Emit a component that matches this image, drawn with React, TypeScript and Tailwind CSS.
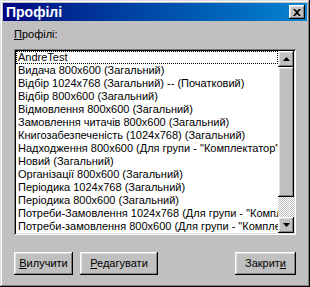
import React from 'react';

const items = [
  'AndreTest',
  'Видача 800x600 (Загальний)',
  'Відбір 1024x768 (Загальний) -- (Початковий)',
  'Відбір 800x600 (Загальний)',
  'Відмовлення 800x600 (Загальний)',
  'Замовлення читачів 800x600 (Загальний)',
  'Книгозабезпеченість (1024x768) (Загальний)',
  'Надходження 800x600 (Для групи - "Комплектатор")',
  'Новий (Загальний)',
  'Організації 800x600 (Загальний)',
  'Періодика 1024x768 (Загальний)',
  'Періодика 800x600 (Загальний)',
  'Потреби-Замовлення 1024x768 (Для групи - "Комплектатор")',
  'Потреби-замовлення 800x600 (Для групи - "Комплектатор")',
];

const raised =
  'shadow-[inset_-1px_-1px_#000,inset_1px_1px_#fff,inset_-2px_-2px_#808080,inset_2px_2px_#dfdfdf]';

const Btn = ({ children, w }: { children: React.ReactNode; w: string }) => (
  <button className={`${w} h-[23px] bg-[#c0c0c0] ${raised} text-[11px] text-black flex items-center justify-center`}>
    {children}
  </button>
);

const Arrow = ({ up }: { up?: boolean }) => (
  <div className={`w-[16px] h-[16px] bg-[#c0c0c0] ${raised} flex items-center justify-center`}>
    <svg width="7" height="4" viewBox="0 0 7 4">
      {up ? <polygon points="3.5,0 7,4 0,4" fill="#000" /> : <polygon points="0,0 7,0 3.5,4" fill="#000" />}
    </svg>
  </div>
);

export default function App() {
  return (
    <div
      className="w-[310px] h-[287px] bg-[#c0c0c0] p-[3px] flex flex-col shadow-[inset_-1px_-1px_#000,inset_1px_1px_#dfdfdf,inset_-2px_-2px_#808080,inset_2px_2px_#fff]"
      style={{ fontFamily: '"Liberation Sans", Arial, sans-serif' }}
    >
      {/* Title bar */}
      <div className="h-[18px] bg-gradient-to-r from-[#000080] to-[#1084d0] flex items-center justify-between pl-[3px] pr-[2px]">
        <span className="text-white font-bold text-[14px] leading-none">Профілі</span>
        <div className={`w-[16px] h-[14px] bg-[#c0c0c0] ${raised} flex items-center justify-center`}>
          <svg width="8" height="7" viewBox="0 0 8 7">
            <path d="M0 0h2l2 2 2-2h2L5 3.5 8 7H6L4 5 2 7H0l3-3.5z" fill="#000" />
          </svg>
        </div>
      </div>

      {/* Body */}
      <div className="flex-1 flex flex-col px-[11px] pt-[7px]">
        <div className="text-[11px] leading-[13px] text-black h-[13px]">
          <span className="underline">П</span>рофілі:
        </div>

        <div className="mt-[8px] h-[186px] flex p-[2px] bg-white shadow-[inset_1px_1px_#808080,inset_-1px_-1px_#fff,inset_2px_2px_#000,inset_-2px_-2px_#dfdfdf]">
          <div className="flex-1 overflow-hidden">
            {items.map((it, i) => (
              <div
                key={i}
                className={`h-[13px] text-[11px] leading-[13px] whitespace-nowrap text-black pl-[2px] ${
                  i === 0 ? 'outline-1 outline-dotted outline-black -outline-offset-1' : ''
                }`}
              >
                {it}
              </div>
            ))}
          </div>
          <div className="w-[16px] flex flex-col">
            <Arrow up />
            <div className={`h-[130px] bg-[#c0c0c0] ${raised}`} />
            <div className="flex-1 bg-[repeating-conic-gradient(#c0c0c0_0_25%,#fff_0_50%)] bg-[length:2px_2px]" />
            <Arrow />
          </div>
        </div>

        <div className="mt-[17px] flex">
          <Btn w="w-[59px]">
            <span>
              <span className="underline">В</span>илучити
            </span>
          </Btn>
          <div className="w-[7px]" />
          <Btn w="w-[78px]">
            <span>
              <span className="underline">Р</span>едагувати
            </span>
          </Btn>
          <div className="flex-1" />
          <Btn w="w-[61px]">
            <span>
              Закрит<span className="underline">и</span>
            </span>
          </Btn>
        </div>
      </div>
    </div>
  );
}
